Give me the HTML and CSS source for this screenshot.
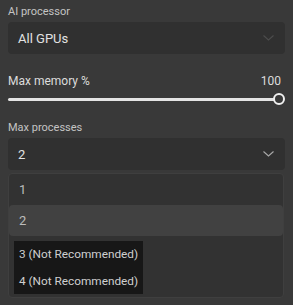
FILE: index.html
```html
<!DOCTYPE html>
<html lang="en-US">
<head>
	<meta charset="UTF-8">
	<title>Settings</title>
	<link rel="stylesheet" href="styles.css">
</head>
<body>
	<div class="panel">
		<div class="field">
			<div class="label">AI processor</div>
			<div class="select">
				<span>All GPUs</span>
				<svg class="chevron dim" width="11" height="6" viewBox="0 0 11 6"><path d="M0.5 0.5 L5.5 5 L10.5 0.5" fill="none" stroke="currentColor" stroke-width="1.1"/></svg>
			</div>
		</div>

		<div class="slider-field">
			<div class="slider-head">
				<span>Max memory %</span>
				<span class="value">100</span>
			</div>
			<div class="slider">
				<div class="track"></div>
				<div class="thumb"></div>
			</div>
		</div>

		<div class="field">
			<div class="label">Max processes</div>
			<div class="select">
				<span>2</span>
				<svg class="chevron" width="11" height="6" viewBox="0 0 11 6"><path d="M0.5 0.5 L5.5 5 L10.5 0.5" fill="none" stroke="currentColor" stroke-width="1.1"/></svg>
			</div>
			<div class="menu">
				<div class="option">1</div>
				<div class="option active">2</div>
				<div class="native">
					<div class="native-item">3 (Not Recommended)</div>
					<div class="native-item">4 (Not Recommended)</div>
				</div>
			</div>
		</div>
	</div>
</body>
</html>
```

FILE: styles.css
```css
html, body
{
	margin: 0;
	background: #393939;
}

body
{
	font-family: Roboto, "Noto Sans", sans-serif;
	color: #dcdcdc;
	width: 293px;
	height: 305px;
	overflow: hidden;
}

.panel
{
	padding: 5px 8px 0 8px;
	display: flex;
	flex-direction: column;
}

.label
{
	font-size: 11px;
	color: #c4c4c4;
	line-height: 14px;
	margin-bottom: 3px;
}

.select
{
	height: 32px;
	background: #303030;
	border-radius: 4px;
	display: flex;
	align-items: center;
	justify-content: space-between;
	padding: 0 11px 0 10px;
	font-size: 13px;
	color: #e2e2e2;
}

.chevron
{
	color: #a8a8a8;
}

.chevron.dim
{
	color: #4c4c4c;
}

.slider-field
{
	margin-top: 19px;
}

.slider-head
{
	display: flex;
	justify-content: space-between;
	font-size: 12px;
	line-height: 16px;
	padding-right: 4px;
}

.slider
{
	position: relative;
	height: 12px;
	margin-top: 4px;
	display: flex;
	align-items: center;
}

.track
{
	flex: 1;
	height: 3px;
	background: #e4e4e4;
	border-radius: 2px;
	margin-right: 6px;
}

.thumb
{
	position: absolute;
	right: 0;
	top: 0;
	width: 8px;
	height: 8px;
	border: 2px solid #f0f0f0;
	border-radius: 50%;
	background: #393939;
}

.field + .slider-field + .field
{
	margin-top: 16px;
}

.menu
{
	margin-top: 3px;
	margin-right: 1px;
	height: 125px;
	background: #323232;
	border: 1px solid #3f3f3f;
	border-radius: 4px;
	box-sizing: border-box;
}

.option
{
	height: 31px;
	display: flex;
	align-items: center;
	padding-left: 10px;
	font-size: 13px;
	color: #bcbcbc;
}

.option.active
{
	background: #414141;
	border-radius: 4px;
}

.native
{
	margin: 5px 0 0 5px;
	width: 129px;
	height: 53px;
	background: #171717;
	display: flex;
	flex-direction: column;
	justify-content: space-around;
}

.native-item
{
	font-size: 11.8px;
	color: #cfcfcf;
	padding-left: 5px;
	white-space: nowrap;
}
```
